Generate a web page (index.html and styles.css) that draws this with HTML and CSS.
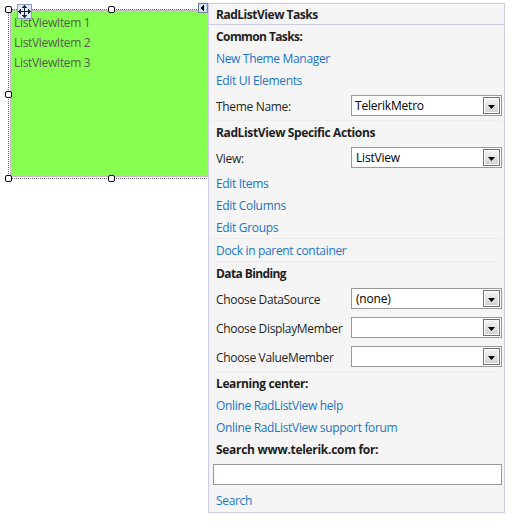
FILE: index.html
```html
<!DOCTYPE html>
<html lang="en">
<head>
<meta charset="utf-8">
<title>RadListView Tasks</title>
<link rel="stylesheet" href="styles.css">
</head>
<body>
<main class="stage">
  <section class="designer">
    <ul class="list">
      <li>ListViewItem 1</li>
      <li>ListViewItem 2</li>
      <li>ListViewItem 3</li>
    </ul>
    <i class="line line-top"></i>
    <i class="line line-left"></i>
    <i class="line line-bottom"></i>
    <i class="handle top left"></i>
    <i class="handle top center"></i>
    <i class="handle middle left"></i>
    <i class="handle bottom left"></i>
    <i class="handle bottom center"></i>
    <svg class="move" width="15" height="15" viewBox="0 0 15 15" shape-rendering="crispEdges">
      <rect x=".5" y=".5" width="14" height="14" fill="#e2eaf7" stroke="#8a9bc0"/>
      <path d="M7 1h1v13h-1zM1 7h13v1h-13zM6 2h3v1h-3zM5 3h5v1h-5zM6 12h3v1h-3zM5 11h5v1h-5zM2 6h1v3h-1zM3 5h1v5h-1zM12 6h1v3h-1zM11 5h1v5h-1z" fill="#1e2838"/>
    </svg>
    <svg class="tag" width="10" height="10" viewBox="0 0 10 10" shape-rendering="crispEdges">
      <rect x=".5" y=".5" width="9" height="9" fill="#cfe3fb" stroke="#6f7f96"/>
      <path d="M3 4h1v-1h1v-1h1v6h-1v-1h-1v-1h-1z" fill="#000"/>
    </svg>
  </section>
  <aside class="panel">
    <h1>RadListView Tasks</h1>
    <section class="group">
      <h2 class="tight">Common Tasks:</h2>
      <a>New Theme Manager</a>
      <a>Edit UI Elements</a>
      <div class="field"><label>Theme Name:</label><div class="combo"><span>TelerikMetro</span><b class="drop"></b></div></div>
    </section>
    <section class="group">
      <h2>RadListView Specific Actions</h2>
      <div class="field"><label>View:</label><div class="combo"><span class="inset">ListView</span><b class="drop"></b></div></div>
      <a>Edit Items</a>
      <a>Edit Columns</a>
      <a>Edit Groups</a>
    </section>
    <section class="group">
      <a>Dock in parent container</a>
    </section>
    <section class="group">
      <h2 class="tight">Data Binding</h2>
      <div class="field"><label>Choose DataSource</label><div class="combo"><span class="inset">(none)</span><b class="drop"></b></div></div>
      <div class="field"><label>Choose DisplayMember</label><div class="combo"><span></span><b class="drop"></b></div></div>
      <div class="field"><label>Choose ValueMember</label><div class="combo"><span></span><b class="drop"></b></div></div>
    </section>
    <section class="group">
      <h2>Learning center:</h2>
      <a>Online RadListView help</a>
      <a>Online RadListView support forum</a>
      <h2 class="wide">Search www.telerik.com for:</h2>
      <div class="search"></div>
      <a>Search</a>
    </section>
  </aside>
</main>
</body>
</html>
```
FILE: styles.css
```css
* { box-sizing: border-box; }
body { margin: 0; background: #fff; font: 12px/22px "Open Sans", "Noto Sans", sans-serif; letter-spacing: -0.33px; color: #1e1e1e; }
.stage { display: flex; align-items: flex-start; width: 525px; height: 529px; padding: 3px 0 0 8px; overflow: hidden; }
.designer { position: relative; width: 200px; height: 179px; padding: 7px 0 0 2px; }
.list { height: 167px; margin: 0; padding: 2px 0 0 3px; list-style: none; background: #86ff50; border: solid #c8b8cc; border-width: 1px 0 1px 1px; line-height: 20px; letter-spacing: -0.33px; color: #55604e; }
.line { position: absolute; }
.line-top { left: 0; right: 0; top: 6px; height: 1px; background: repeating-linear-gradient(90deg, #666 0 1px, #fff 1px 2px); }
.line-bottom { left: 0; right: 0; top: 175px; height: 1px; background: repeating-linear-gradient(90deg, #666 0 1px, #fff 1px 2px); }
.line-left { left: 0; top: 6px; width: 1px; height: 170px; background: repeating-linear-gradient(#666 0 1px, #fff 1px 2px); }
.handle { position: absolute; width: 7px; height: 7px; background: #fff; border: 1px solid #000; border-radius: 2px; }
.top { top: 3px; }
.middle { top: 88px; }
.bottom { top: 172px; }
.left { left: -3px; }
.center { left: 100px; }
.move { position: absolute; left: 9px; top: 1px; }
.tag { position: absolute; left: 190px; top: 0; }
.panel { width: 297px; height: 510px; background: #f5f5f5; border: 1px solid #cccce0; }
h1, h2 { margin: 0; font-size: 12px; line-height: 24px; font-weight: 700; letter-spacing: -0.38px; }
h1 { height: 21px; padding-left: 7px; line-height: 22px; letter-spacing: -0.48px; border-bottom: 1px solid #cccce0; }
h2 { height: 22px; }
.tight { letter-spacing: -0.6px; }
.wide { letter-spacing: -0.3px; }
.group { margin: 0 2px; padding-left: 5px; }
.group + .group { border-top: 1px solid #ececee; }
h2, a, .field { white-space: nowrap; }
a { display: block; height: 22px; line-height: 24px; color: #1a74c4; }
.field { display: flex; justify-content: space-between; height: 29px; padding: 4px 0; }
label { line-height: 24px; letter-spacing: -0.33px; }
.combo { display: flex; justify-content: space-between; width: 151px; height: 21px; padding: 1px; border: 1px solid #999; background: #fff; line-height: 18px; letter-spacing: -0.2px; color: #000; }
.combo span { padding-left: 2px; }
.combo .inset { padding-left: 3px; }
.drop { display: flex; justify-content: center; width: 17px; height: 17px; padding-top: 7px; border: 1px solid #707070; background: linear-gradient(#f4f4f4, #d0d0d0); box-shadow: inset 0 0 0 1px #fff; }
.drop::after { content: ""; width: 7px; height: 4px; background: #000; clip-path: polygon(0 0, 100% 0, 50% 100%); }
.search { height: 21px; margin: 4px 0 4px -3px; border: 1px solid #999; background: #fff; }
```
